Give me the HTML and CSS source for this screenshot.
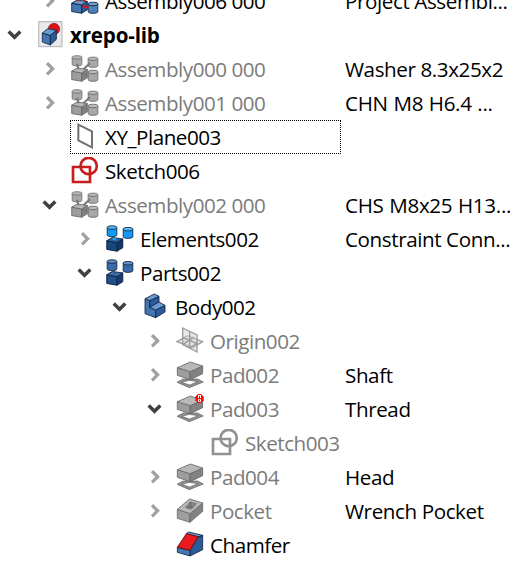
FILE: index.html
```html
<!DOCTYPE html>
<html lang="en">
<head>
<meta charset="utf-8">
<title>Model tree</title>
<link rel="stylesheet" href="styles.css">
</head>
<body>
<svg class="defs" width="0" height="0">
<symbol id="closed" viewBox="0 0 36 34"><path class="arrow" d="M47.5 11.2l5.6 5.6-5.6 5.6" transform="translate(-35.5 0)"/></symbol>
<symbol id="open" viewBox="0 0 36 34"><path class="arrow arrow-open" d="M8.7 13.6l5.8 5.6 5.8-5.6"/></symbol>
<symbol id="cyl" viewBox="0 0 33 34" preserveAspectRatio="none"><path class="cyl" d="M2 7v20c0 7 29 7 29 0V7z"/><ellipse class="cyltop" cx="16.5" cy="7" rx="14.5" ry="5"/></symbol>
<symbol id="cube" viewBox="0 0 48 46" preserveAspectRatio="none"><path class="front" d="M2 14l28 5v24L2 38z"/><path class="side" d="M30 19l16-10v24L30 43z"/><path class="top" d="M2 14l15-9 29 4-16 10z"/></symbol>
<symbol id="assembly" viewBox="0 0 84 84">
<use href="#cyl" x="1" y="0" width="34" height="35"/><use href="#cyl" x="49" y="4" width="34" height="35"/>
<use href="#cube" x="0" y="34" width="51" height="48"/><use href="#cyl" x="49" y="43" width="34" height="38"/>
<path class="link" d="M18 26l5 17M37 43l20-18M34 57l19 5"/></symbol>
<symbol id="group" viewBox="0 0 84 84">
<use href="#cyl" x="1" y="0" width="34" height="37"/><use href="#cyl" x="49" y="5" width="34" height="37"/><use href="#cube" x="0" y="32" width="53" height="50"/><path class="spot" d="M19 42c0-5 12-5 12 0s-12 4-12 0"/></symbol>
<symbol id="document" viewBox="0 0 84 84"><path class="paper" d="M8 2h70v75H8z"/><circle cx="54" cy="24" r="17" fill="#d51318" stroke="#9b0b10" stroke-width="2"/><path class="front" d="M19 36l24 7v29l-24-9z"/><path class="side" d="M43 43l18-15v27L43 72z"/><path class="top" d="M19 36l16-13 26 5-18 15z"/></symbol>
<symbol id="plane" viewBox="0 0 84 84"><path d="M22 5l41 20v48L22 52z" fill="#fff" stroke="#747070" stroke-width="6"/></symbol>
<symbol id="sketch" viewBox="0 0 84 84"><path class="sk" d="M6 30h51v45H6z"/><circle class="sk" cx="53" cy="27" r="24.5"/></symbol>
<symbol id="body" viewBox="0 0 84 84"><path class="front" d="M12 17l14 6v20l18 8v23l-32-12z"/><path class="side" d="M44 51l28-14v20L44 74zM26 23L54 10v18L26 43z"/><path class="top" d="M12 17L40 3l14 7-28 13zM26 43l28-16 18 10-28 14z"/></symbol>
<symbol id="origin" viewBox="0 0 84 84"><g fill="#d2d2d2" fill-opacity=".5" stroke="#9b9b9b" stroke-width="4"><path d="M3 44l32-18 45 18-29 18z"/><path d="M20 3l43 21v51L20 53z"/><path d="M20 53l34-23M41 13v50M20 31l43 19M42 63l23-16" fill="none"/></g></symbol>
<symbol id="pad" viewBox="0 0 84 84"><path class="plate" fill-rule="evenodd" d="M3 64l18-10h44l17 9-42 17zm14 0l24 8 25-10-26-4z"/><path class="front" d="M4 20l38 12v24L4 43z"/><path class="side" d="M42 32l38-17v23L42 56z"/><path class="top" d="M4 20L43 3l37 12-38 17z"/></symbol>
<symbol id="pocket" viewBox="0 0 84 84"><path class="front" d="M4 37l38 13v26L4 64z"/><path class="side" d="M42 50l38-32v25L42 76z"/><path class="top" d="M4 37L41 6l39 12-38 32z"/><path d="M28 31l15-16 18 5-15 17z" fill="#858585" stroke="#656565" stroke-width="2"/><path d="M43 15l1 14-11 4M44 29l7 2" fill="none" stroke="#555" stroke-width="2"/></symbol>
<symbol id="chamfer" viewBox="0 0 84 84"><path class="side" d="M66 18l14-5v43L42 75V58z"/><path class="front" d="M4 49l38 9v17L4 64z"/><path class="top" d="M31 8l7-5 42 10-14 5z"/><path d="M4 49L31 8l36 9-26 41z" fill="#e9191c" stroke="#63080d" stroke-width="2.5"/></symbol>
</svg>
<main class="tree">
<div class="row l1"><svg class="chev"><use href="#closed"/></svg><svg class="icon blue linked"><use href="#assembly"/></svg><span class="name">Assembly006 000</span><span class="desc">Project Assembl...</span></div>
<div class="row l0"><svg class="chev"><use href="#open"/></svg><svg class="icon blue"><use href="#document"/></svg><span class="name root">xrepo-lib</span></div>
<div class="row l1 off"><svg class="chev"><use href="#closed"/></svg><svg class="icon"><use href="#assembly"/></svg><span class="name">Assembly000 000</span><span class="desc">Washer 8.3x25x2</span></div>
<div class="row l1 off"><svg class="chev"><use href="#closed"/></svg><svg class="icon"><use href="#assembly"/></svg><span class="name">Assembly001 000</span><span class="desc caps">CHN M8 H6.4 ...</span></div>
<div class="row l1"><span class="chev"></span><div class="focus"><svg class="icon"><use href="#plane"/></svg><span class="name">XY_Plane003</span></div></div>
<div class="row l1"><span class="chev"></span><svg class="icon red"><use href="#sketch"/></svg><span class="name">Sketch006</span></div>
<div class="row l1 off"><svg class="chev"><use href="#open"/></svg><svg class="icon"><use href="#assembly"/></svg><span class="name">Assembly002 000</span><span class="desc caps">CHS M8x25 H13...</span></div>
<div class="row l2"><svg class="chev"><use href="#closed"/></svg><svg class="icon blue bright"><use href="#group"/></svg><span class="name">Elements002</span><span class="desc">Constraint Conn...</span></div>
<div class="row l2"><svg class="chev"><use href="#open"/></svg><svg class="icon blue parts"><use href="#group"/></svg><span class="name">Parts002</span></div>
<div class="row l3"><svg class="chev"><use href="#open"/></svg><svg class="icon blue"><use href="#body"/></svg><span class="name">Body002</span></div>
<div class="row l4 off"><svg class="chev"><use href="#closed"/></svg><svg class="icon"><use href="#origin"/></svg><span class="name">Origin002</span></div>
<div class="row l4 off"><svg class="chev"><use href="#closed"/></svg><svg class="icon"><use href="#pad"/></svg><span class="name">Pad002</span><span class="desc">Shaft</span></div>
<div class="row l4 off"><svg class="chev"><use href="#open"/></svg><svg class="icon" viewBox="0 0 84 84"><use href="#pad" width="84" height="84"/><path d="M66-3h9l8 8v11l-8 8h-9l-8-8V5z" fill="#f00"/><path d="M66 0h9v9h-9zM66 13h9v7h-9z" fill="#fff"/><path d="M69 2h3v7h-3zM69 14h3v4h-3z" fill="#f00"/></svg><span class="name">Pad003</span><span class="desc">Thread</span></div>
<div class="row l5 off"><span class="chev"></span><svg class="icon"><use href="#sketch"/></svg><span class="name">Sketch003</span></div>
<div class="row l4 off"><svg class="chev"><use href="#closed"/></svg><svg class="icon"><use href="#pad"/></svg><span class="name">Pad004</span><span class="desc">Head</span></div>
<div class="row l4 off"><svg class="chev"><use href="#closed"/></svg><svg class="icon"><use href="#pocket"/></svg><span class="name">Pocket</span><span class="desc">Wrench Pocket</span></div>
<div class="row l4"><span class="chev"></span><svg class="icon blue"><use href="#chamfer"/></svg><span class="name">Chamfer</span></div>
</main>
</body>
</html>
```
FILE: styles.css
```css
html, body { margin: 0; height: 565px; overflow: hidden; background: #fff; }
body { display: flow-root; font: 20.6px/34px "Open Sans", "Noto Sans", sans-serif; letter-spacing: -0.47px; color: #000; }
.defs { display: block; width: 0; height: 0; }
.tree { margin-top: -16px; width: 522px; }
.row { --indent: 0px; display: grid; grid-template-columns: 36px 34px calc(275px - var(--indent)) 1fr; padding-left: var(--indent); height: 34px; white-space: nowrap; box-sizing: border-box; }
.l1 { --indent: 35px; }
.l2 { --indent: 70px; }
.l3 { --indent: 105px; }
.l4 { --indent: 140px; }
.l5 { --indent: 175px; }
.chev { width: 36px; height: 34px; }
.icon { width: 28px; height: 28px; margin-top: 3px; overflow: visible; }
.off .name { color: #7b7b7b; }
.desc { letter-spacing: -0.4px; }
.caps { letter-spacing: -0.3px; word-spacing: 0.6px; }
.root { font-weight: 700; letter-spacing: -0.2px; }
.focus { grid-column: 2 / 4; display: grid; grid-template-columns: 34px 1fr; width: 271px; height: 34px; margin-left: -1px; padding-left: 1px; box-sizing: border-box; outline: 1px dotted #000; outline-offset: -1px; }

.arrow { fill: none; stroke: #a0a0a0; stroke-width: 3.3; }
.arrow-open { stroke: #404040; stroke-width: 3.5; }

.icon { --line: #686868; --front: #9d9d9d; --side: #828282; --top: #b8b8b8; --cyl: #a8a8a8; --cyltop: #bbb; --link: #777; --sk: #929292; --spot: none; }
.blue { --line: #10233d; --front: #4476b4; --side: #2b5b9a; --top: #6a9ad3; --cyl: #4f7fb9; --cyltop: #769fce; --link: #d51a20; }
.bright { --front: #17477e; --side: #103766; --top: #28659f; --cyl: #1699f5; --cyltop: #54bafa; --spot: #28a7e7; }
.parts { --front: #214e8e; --side: #173d75; --top: #3b6ca8; --cyl: #3a6aa8; --cyltop: #6290c4; }
.red { --sk: #c81e1e; }
.front, .side, .top, .cyl, .cyltop { stroke: var(--line); stroke-width: 2.5; stroke-linejoin: round; }
.front { fill: var(--front); }
.side { fill: var(--side); }
.top { fill: var(--top); }
.cyl { fill: var(--cyl); }
.cyltop { fill: var(--cyltop); }
.link { fill: none; stroke: var(--link); stroke-width: 6; }
.spot { fill: var(--spot); }
.plate { fill: #909090; stroke: #626262; stroke-width: 2; }
.paper { fill: #e9e9eb; stroke: #929292; stroke-width: 2; }
.sk { fill: none; stroke: var(--sk); stroke-width: 8; }
```
